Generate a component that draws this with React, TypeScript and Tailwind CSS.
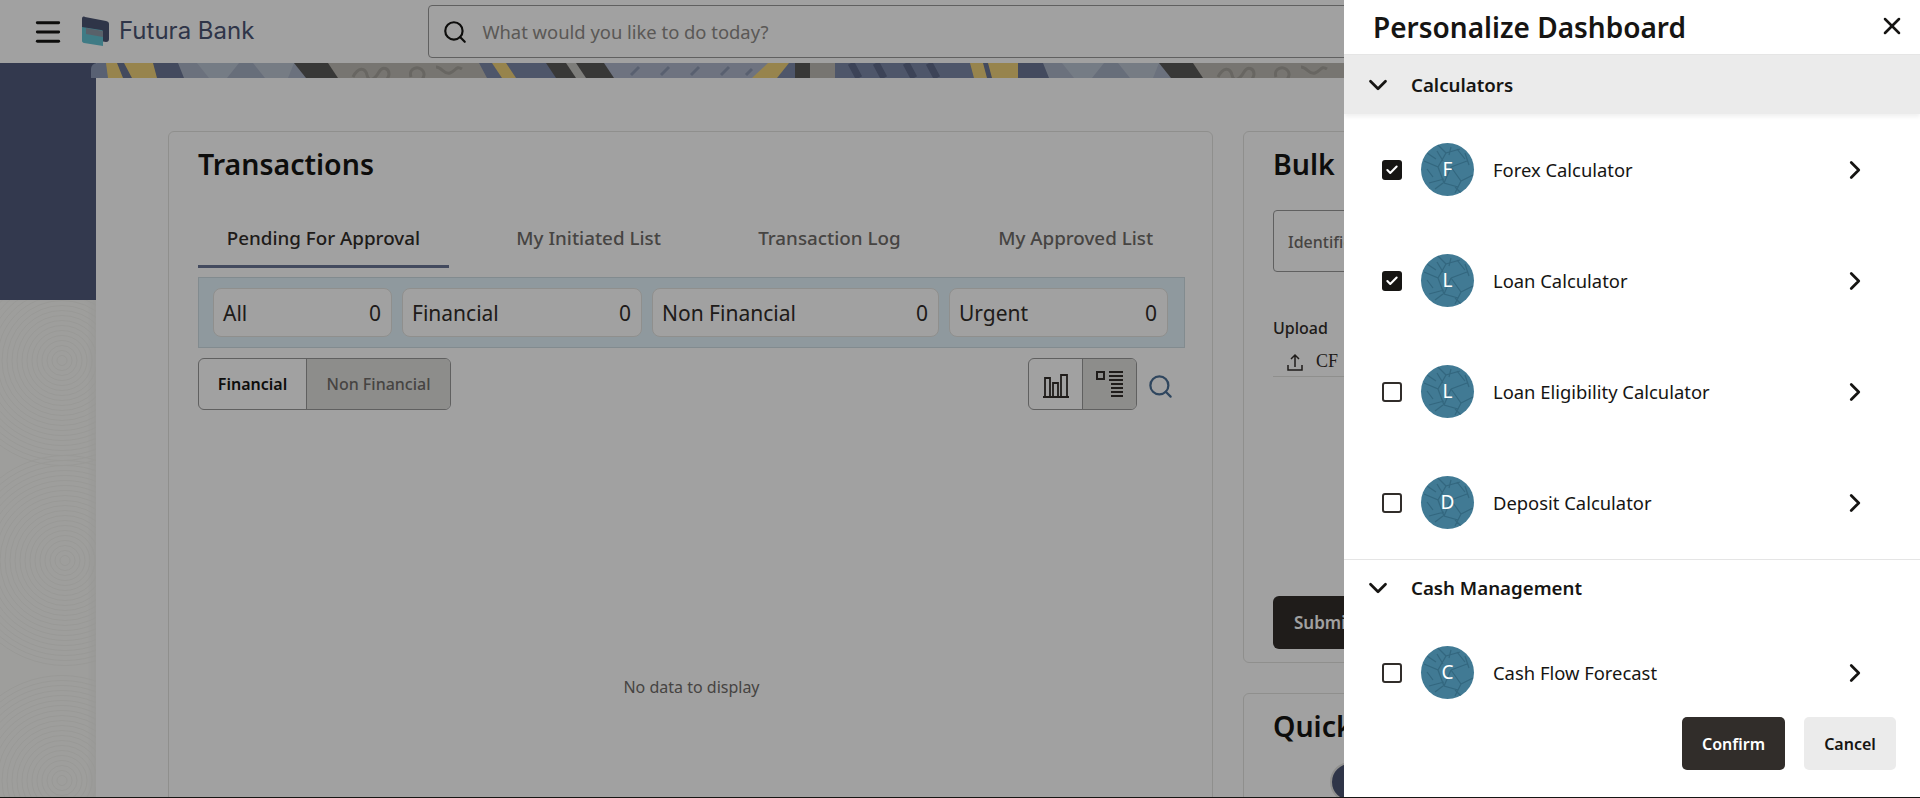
import { Check, ChevronDown, ChevronRight, Menu, Search, X } from "lucide-react";

const FONT = "font-['Noto_Sans',sans-serif]";

// left edge, slant and colour of each band in the header artwork; later bands paint over earlier ones
const BANNER: [number, number, string][] = [
  [0, 0, "#8d9ab6"],
  [16, 1, "#f0d27a"],
  [29, 3, "#6a7595"],
  [37, 4, "#f0d27a"],
  [64, 2, "#6a7595"],
  [90, 3, "#aab4c6"],
  [112, 6, "#bac4d3"],
  [142, -6, "#a4aec2"],
  [168, 6, "#bcc5d2"],
  [200, -3, "#aab4c6"],
  [209, 6, "#5a5957"],
  [242, 5, "#bdbab3"],
  [392, 4, "#7c88a8"],
  [406, 5, "#f0d27a"],
  [420, 5, "#7c88a8"],
  [460, 5, "#5a5957"],
  [480, 5, "#c8c8c3"],
  [490, 5, "#5a5957"],
  [518, 5, "#aeb7cb"],
  [669, -8, "#f0d27a"],
  [692, -6, "#7c88a8"],
  [704, 0, "#5a5957"],
  [719, 0, "#bdbab3"],
  [744, 0, "#7c88a8"],
  [881, 2, "#f0d27a"],
  [894, 2, "#6a7595"],
  [899, 2, "#f0d27a"],
  [927, 0, "#6a7595"],
];

function BannerBands() {
  return (
    <>
      {BANNER.map(([x, s, c], i) => (
        <polygon key={i} points={`${x - s},0 1300,0 1300,15 ${x + s},15`} fill={c} />
      ))}
      {/* squiggles on the grey band */}
      <path
        d="M262 14c5-10 12-10 14-2s8 4 12-3 10-3 10 2-6 8-2 8M320 14c-3-9 8-12 12-6s-4 8 2 8M345 4c6 0 8 8 14 6s6-8 12-4"
        fill="none"
        stroke="#a5a29b"
        strokeWidth="3"
      />
      {/* stripes on the navy band */}
      <path d="M760 0l8 15M785 0l8 15M815 0l8 15M838 0l8 15" stroke="#5f6b8a" strokeWidth="7" />
      <path d="M540 12l8-8M570 12l8-8M600 12l8-8M630 12l8-8M655 12l6-6" stroke="#8e99b2" strokeWidth="3" />
    </>
  );
}

function Banner() {
  return (
    <div className="relative -ml-[5px] h-[15px] overflow-hidden rounded-tl-[6px]">
      <svg width="1300" height="15" viewBox="0 0 1300 15">
        <g transform="translate(865 0)">
          <BannerBands />
        </g>
        <svg width="949" height="15" viewBox="0 0 949 15">
          <BannerBands />
        </svg>
      </svg>
    </div>
  );
}

function Logo() {
  return (
    <svg width="28" height="30" viewBox="0 0 28 30" className="shrink-0">
      <path d="M1 3c0-2 1-3 3-2l21 4c2 .4 3 1.400 3 3v15c0 2-1 3-3 3L1 22z" fill="#4b5473" />
      <path d="M1 11l19 3c2 .3 2 1 2 3v13L3 27c-1-.2-2-1-2-2z" fill="#65c3d3" />
      <path d="M5 12l17 3v6l-17-3z" fill="#8d9aa8" />
    </svg>
  );
}

const RINGS = [5, 10, 15, 20, 25, 30, 35, 40, 45, 50, 55, 60, 65, 70, 75, 80, 85, 90, 95, 100, 105];

function Fingerprint() {
  const centers = [
    [62, 60],
    [65, 260],
    [62, 480],
  ];
  return (
    <svg className="h-full w-full" viewBox="0 0 96 497">
      {centers.map(([cx, cy]) =>
        RINGS.map((r) => (
          <circle key={`${cy}-${r}`} cx={cx} cy={cy} r={r} fill="none" stroke="#f2f2ee" strokeWidth="1" />
        )),
      )}
    </svg>
  );
}

function Pill({ label, width }: { label: string; width: string }) {
  return (
    <div className={`flex h-[49px] items-center justify-between rounded-[8px] border border-[#e3e3e0] bg-white pl-[9px] pr-[10px] pt-[2px] text-[21px] text-[#312d2a] ${width}`}>
      <span>{label}</span>
      <span>0</span>
    </div>
  );
}

function Avatar({ letter }: { letter: string }) {
  return (
    <div className="relative flex h-[53px] w-[53px] shrink-0 items-center justify-center overflow-hidden rounded-full bg-[#417a94]">
      <svg className="absolute inset-0" viewBox="0 0 53 53" fill="none" stroke="#33677f" strokeWidth="1.200">
        <path d="M3 18l14 6 6 16 14 4M17 24l8-14 14-4M25 10l-8-8M30 24l16-6M30 24l-7 16M30 24l10 14 12-6M8 40l15-4M40 38l-6 12M6 10l9 6M36 6l8 10M12 34l-6-8M14 46l8-6M44 10l4 12M30 4l-2 8M34 44l6 6M22 18l-6-10" />
      </svg>
      <span className="relative text-[19px] text-white">{letter}</span>
    </div>
  );
}

function Row({ letter, label, checked }: { letter: string; label: string; checked?: boolean }) {
  return (
    <div className="flex h-[111px] shrink-0 items-center pl-[38px] pr-[50px]">
      {checked ? (
        <div className="flex h-[20px] w-[20px] items-center justify-center rounded-[3px] bg-[#161513]">
          <Check size={14} strokeWidth={3.5} className="text-white" />
        </div>
      ) : (
        <div className="h-[20px] w-[20px] rounded-[3px] border-2 border-[#312d2a]" />
      )}
      <div className="ml-[19px]">
        <Avatar letter={letter} />
      </div>
      <span className="ml-[19px] text-[18.4px] text-[#161513]">{label}</span>
      <ChevronRight size={30} strokeWidth={2.200} className="ml-auto text-[#161513]" />
    </div>
  );
}

function Section({ label, shaded }: { label: string; shaded?: boolean }) {
  return (
    <div className={`flex shrink-0 items-center pl-[19px] ${shaded ? "h-[59px] bg-[#ebebeb] pt-[2px] shadow-[0_3px_4px_rgba(0,0,0,0.06)]" : "h-[57px]"}`}>
      <ChevronDown size={30} strokeWidth={2.200} className="mb-[2px] text-[#161513]" />
      <span className="ml-[18px] text-[18.7px] font-semibold text-[#161513]">{label}</span>
    </div>
  );
}

export default function App() {
  return (
    <div className={`relative h-[798px] w-full overflow-hidden bg-white ${FONT}`}>
      <header className="flex h-[63px] items-center bg-white">
        <Menu size={32} strokeWidth={2.200} className="ml-[32px] text-[#161513]" />
        <div className="mb-[2px] ml-[17px] flex items-center gap-[10px]">
          <Logo />
          <span className="font-['Inter',sans-serif] text-[24px] font-normal leading-none text-[#4b5473]">Futura Bank</span>
        </div>
        <div className="ml-[174px] flex h-[53px] w-[1300px] items-center rounded-[4px] border border-[#989898]">
          <Search size={26} strokeWidth={2} className="ml-[13px] text-[#161513]" />
          <span className="ml-[14px] text-[18.4px] text-[#8f8c88]">What would you like to do today?</span>
        </div>
      </header>

      <div className="flex h-[735px]">
        <aside className="flex w-[96px] shrink-0 flex-col">
          <div className="h-[237px] bg-[#515b7c]" />
          <div className="flex-1 bg-[#fbfbf8] shadow-[inset_-6px_0_6px_rgba(0,0,0,0.03)]">
            <Fingerprint />
          </div>
        </aside>

        <div className="min-w-0 flex-1">
          <Banner />
          <main className="flex h-[720px] gap-[30px] overflow-hidden bg-white pl-[72px] pt-[53px]">
            <section className="h-[700px] w-[1045px] shrink-0 rounded-[6px] border border-[#e3e3e0] px-[29px] pt-[16px]">
              <h2 className="text-[28.5px] font-semibold leading-[32px] text-[#161513]">Transactions</h2>

              <div className="mt-[28px] flex h-[60px] gap-[38px] text-[18.8px]">
                <div className="flex w-[251px] items-center justify-center border-b-[3px] border-[#6a7595] pt-[3px] font-medium text-[#312d2a]">Pending For Approval</div>
                <div className="flex w-[204px] items-center justify-center pt-[1px] font-medium text-[#6f6c69]">My Initiated List</div>
                <div className="flex w-[202px] items-center justify-center pt-[1px] font-medium text-[#6f6c69]">Transaction Log</div>
                <div className="flex w-[215px] items-center justify-center pt-[1px] font-medium text-[#6f6c69]">My Approved List</div>
              </div>

              <div className="mt-[9px] flex h-[71px] w-[987px] items-center gap-[10px] border border-[#cfdde3] bg-[#e3f3fb] pl-[14px]">
                <Pill label="All" width="w-[179px]" />
                <Pill label="Financial" width="w-[240px]" />
                <Pill label="Non Financial" width="w-[287px]" />
                <Pill label="Urgent" width="w-[219px]" />
              </div>

              <div className="mt-[10px] flex w-[987px] items-center justify-between pr-[11px]">
                <div className="flex h-[52px] w-[253px] overflow-hidden rounded-[6px] border border-[#989898] text-[16px]">
                  <div className="flex w-[108px] items-center justify-center border-r border-[#989898] font-semibold text-[#161513]">Financial</div>
                  <div className="flex flex-1 items-center justify-center bg-[#e0e0dd] font-medium text-[#6f6c69]">Non Financial</div>
                </div>
                <div className="flex items-center gap-[10px]">
                  <div className="flex h-[52px] w-[109px] overflow-hidden rounded-[6px] border border-[#989898]">
                    <div className="flex w-[54px] items-center justify-center border-r border-[#989898]">
                      <svg width="26" height="28" viewBox="0 0 26 28" fill="none" stroke="#312d2a" strokeWidth="1.800">
                        <path d="M0 27h26M2 26V8h5v18M10 26V13h5v13M18 26V5h6v21" />
                      </svg>
                    </div>
                    <div className="flex flex-1 items-center justify-center bg-[#e0e0dd]">
                      <svg width="27" height="29" viewBox="0 0 27 29" fill="#312d2a">
                        <path fillRule="evenodd" d="M0 1h9v9H0zM2 3v5h5V3zM13 1h14v2H13zM13 5h14v2H13zM13 9h14v2H13zM15 13h12v2H15zM15 17h12v2H15zM15 21h12v2H15zM15 25h12v2H15z" />
                      </svg>
                    </div>
                  </div>
                  <Search size={27} strokeWidth={2} className="mt-[4px] text-[#4b6f96]" />
                </div>
              </div>

              <p className="mt-[264px] w-[987px] text-center text-[16px] leading-[26px] text-[#6f6c69]">No data to display</p>
            </section>

            <div className="flex w-[500px] shrink-0 flex-col gap-[30px]">
              <section className="h-[532px] shrink-0 rounded-[6px] border border-[#e3e3e0] px-[29px] pt-[16px]">
                <h2 className="text-[28.5px] font-semibold leading-[32px] text-[#161513]">Bulk File</h2>
                <div className="mt-[30px] flex h-[62px] w-[300px] items-center rounded-[4px] border border-[#989898] pl-[14px] pt-[2px] text-[16px] font-medium text-[#6f6c69]">Identifier</div>
                <p className="mt-[44px] text-[16px] font-medium leading-[24px] text-[#312d2a]">Upload</p>
                <div className="mt-[7px] flex h-[30px] items-center border-b border-[#e3e3e0] pl-[14px]">
                  <svg width="16" height="18" viewBox="0 0 16 18" fill="none" stroke="#312d2a" strokeWidth="1.500">
                    <path d="M1 12v5h14v-5M8 14V2M4 6l4-4 4 4" />
                  </svg>
                  <span className="ml-[13px] font-['Liberation_Serif',serif] text-[18px] text-[#312d2a]">CF</span>
                </div>
                <div className="mt-[219px] flex h-[53px] w-[140px] items-center rounded-[6px] bg-[#312d2a] pl-[21px] text-[17px] font-semibold text-white">Submit</div>
              </section>
              <section className="h-[300px] shrink-0 rounded-[6px] border border-[#e3e3e0] px-[29px] pt-[16px]">
                <h2 className="text-[28.5px] font-semibold leading-[32px] text-[#161513]">Quick</h2>
                <div className="ml-[57px] mt-[20px] h-[40px] w-[40px] rounded-full border-2 border-[#e3e3e0] bg-[#4b5473]" />
              </section>
            </div>
          </main>
        </div>
      </div>

      <div className="absolute inset-0 bg-[rgba(0,0,0,0.37)]" />

      <aside className="absolute bottom-0 right-0 top-0 flex w-[576px] flex-col bg-white">
        <div className="flex h-[55px] shrink-0 items-center justify-between border-b border-[#e5e5e5] pl-[29px] pr-[14px]">
          <h1 className="text-[28px] font-semibold text-[#161513]">Personalize Dashboard</h1>
          <X size={28} strokeWidth={2.200} className="mb-[2px] text-[#161513]" />
        </div>
        <div className="flex h-[650px] shrink-0 flex-col overflow-hidden">
          <Section label="Calculators" shaded />
          <Row letter="F" label="Forex Calculator" checked />
          <Row letter="L" label="Loan Calculator" checked />
          <Row letter="L" label="Loan Eligibility Calculator" />
          <div className="border-b border-[#e5e5e5] pb-px">
            <Row letter="D" label="Deposit Calculator" />
          </div>
          <Section label="Cash Management" />
          <Row letter="C" label="Cash Flow Forecast" />
        </div>
        <div className="flex flex-1 justify-end gap-[19px] pr-[24px] pt-[12px]">
          <button className="h-[53px] w-[103px] rounded-[5px] bg-[#312d2a] text-[16px] font-semibold text-white">Confirm</button>
          <button className="h-[53px] w-[92px] rounded-[5px] bg-[#ebebeb] text-[16px] font-semibold text-[#161513]">Cancel</button>
        </div>
      </aside>

      <div className="absolute bottom-0 left-0 h-px w-full bg-[#161513]" />
    </div>
  );
}
